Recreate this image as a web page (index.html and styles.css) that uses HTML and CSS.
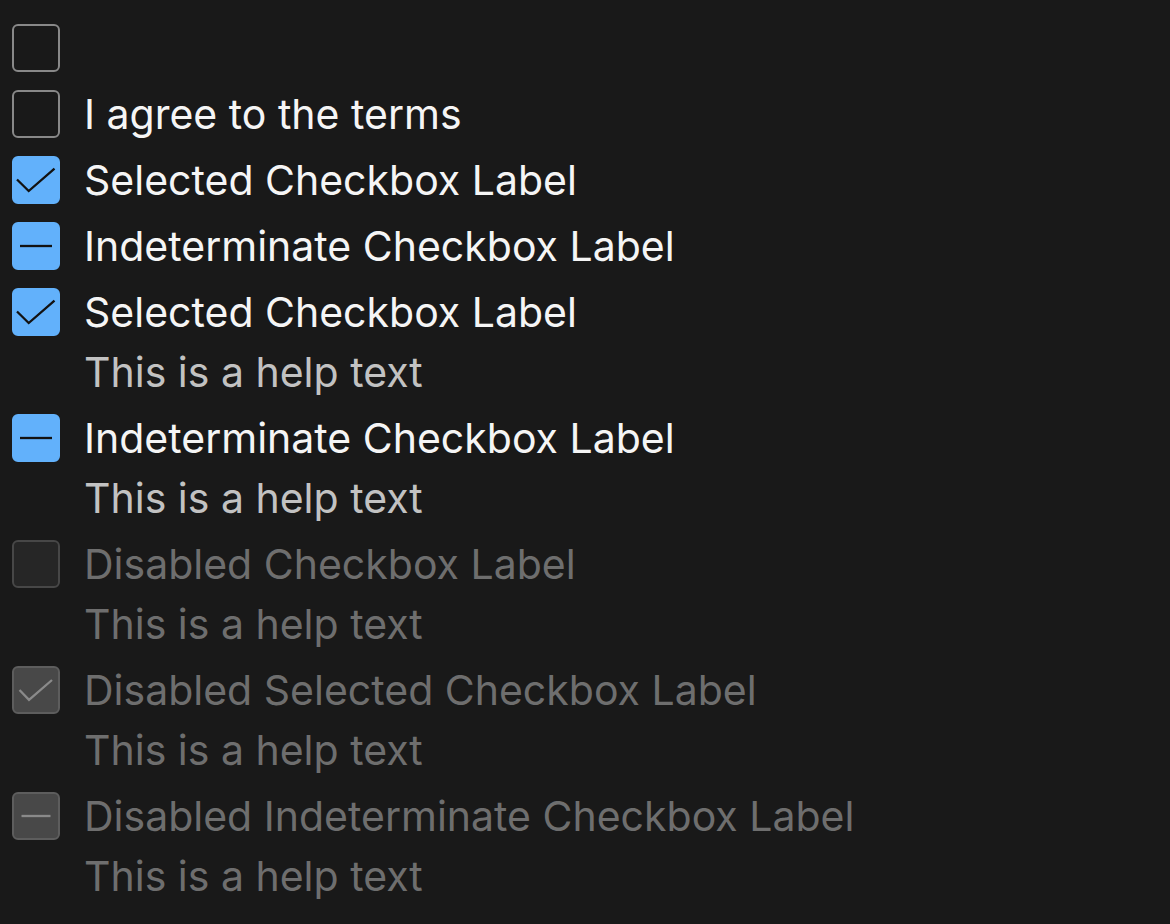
FILE: index.html
```html
<!DOCTYPE html>
<html lang="en">
<head>
<meta charset="utf-8">
<title>Checkboxes</title>
<link rel="stylesheet" href="styles.css">
</head>
<body>
<div class="list">
  <div class="item">
    <span class="box"></span>
  </div>
  <div class="item">
    <span class="box"></span>
    <span class="label">I agree to the terms</span>
  </div>
  <div class="item">
    <span class="box checked"><svg viewBox="0 0 48 48"><path class="mark" d="M5 23.5 L16.7 35 L42.5 12.7"/></svg></span>
    <span class="label">Selected Checkbox Label</span>
  </div>
  <div class="item">
    <span class="box checked"><svg viewBox="0 0 48 48"><path class="mark" d="M8 24 H40"/></svg></span>
    <span class="label">Indeterminate Checkbox Label</span>
  </div>
  <div class="item">
    <span class="box checked"><svg viewBox="0 0 48 48"><path class="mark" d="M5 23.5 L16.7 35 L42.5 12.7"/></svg></span>
    <span class="label">Selected Checkbox Label</span>
    <span class="help">This is a help text</span>
  </div>
  <div class="item">
    <span class="box checked"><svg viewBox="0 0 48 48"><path class="mark" d="M8 24 H40"/></svg></span>
    <span class="label">Indeterminate Checkbox Label</span>
    <span class="help">This is a help text</span>
  </div>
  <div class="item disabled">
    <span class="box"></span>
    <span class="label">Disabled Checkbox Label</span>
    <span class="help">This is a help text</span>
  </div>
  <div class="item disabled">
    <span class="box checked"><svg viewBox="0 0 48 48"><path class="mark" d="M7.5 24 L17 33.8 L40 14"/></svg></span>
    <span class="label">Disabled Selected Checkbox Label</span>
    <span class="help">This is a help text</span>
  </div>
  <div class="item disabled">
    <span class="box checked"><svg viewBox="0 0 48 48"><path class="mark" d="M9.5 24 H38.5"/></svg></span>
    <span class="label">Disabled Indeterminate Checkbox Label</span>
    <span class="help">This is a help text</span>
  </div>
</div>
</body>
</html>
```
FILE: styles.css
```css
html, body {
  margin: 0;
  background: #191919;
}
body {
  padding: 24px 12px;
  font-family: Inter, "Noto Sans", sans-serif;
  font-size: 41px;
  color: #f5f5f5;
}
.list {
  display: flex;
  flex-direction: column;
  gap: 18px;
}
.item {
  display: grid;
  grid-template-columns: 48px 1fr;
  column-gap: 24px;
  align-items: center;
}
.box {
  box-sizing: border-box;
  width: 48px;
  height: 48px;
  border: 2px solid #888888;
  border-radius: 6px;
  display: flex;
  position: relative;
}
.box svg {
  position: absolute;
  left: -2px;
  top: -2px;
  width: 48px;
  height: 48px;
}
.box.checked {
  background: #62b1fb;
  border-color: #62b1fb;
}
.mark {
  fill: none;
  stroke: #121212;
  stroke-width: 2.3;
  stroke-linecap: butt;
  stroke-linejoin: miter;
}
.label {
  line-height: 48px;
  white-space: nowrap;
}
.help {
  grid-column: 2;
  margin-top: 12px;
  line-height: 48px;
  color: #c2c2c2;
  white-space: nowrap;
}
.disabled .label,
.disabled .help {
  color: #6e6e6e;
}
.disabled .box {
  background: #262626;
  border-color: #474747;
}
.disabled .box.checked {
  background: #484848;
  border-color: #5d5d5d;
}
.disabled .mark {
  stroke: #8a8a8a;
}
```
